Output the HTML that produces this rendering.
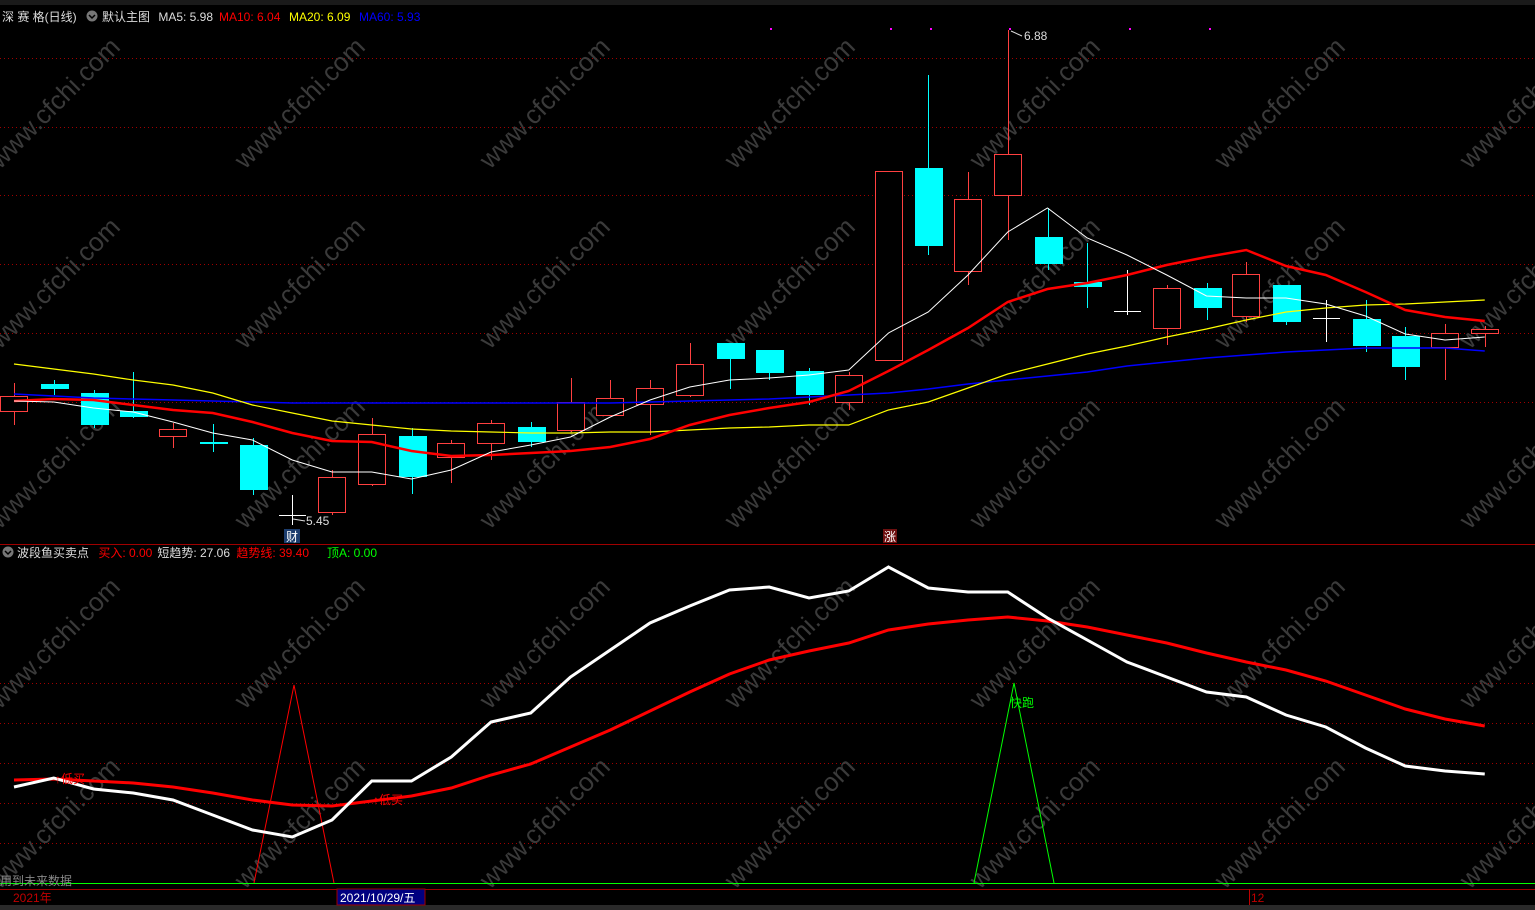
<!DOCTYPE html>
<html><head><meta charset="utf-8"><style>
body{margin:0;background:#000;width:1535px;height:910px;overflow:hidden;font-family:"Liberation Sans","Noto Sans CJK SC",sans-serif}
svg{position:absolute;left:0;top:0}
.t{font-size:12px}
</style></head><body>
<svg id="s" width="1535" height="910" xmlns="http://www.w3.org/2000/svg">
<rect width="1535" height="910" fill="#000"/>
<rect x="0" y="0" width="1535" height="5" fill="#1a1a1a"/>
<rect x="0" y="905" width="1535" height="5" fill="#2a2a2a"/>
<g stroke="#a00000" stroke-dasharray="1,3" stroke-width="1">
<line x1="0" y1="58.5" x2="1535" y2="58.5"/><line x1="0" y1="127.5" x2="1535" y2="127.5"/>
<line x1="0" y1="195.5" x2="1535" y2="195.5"/><line x1="0" y1="264.5" x2="1535" y2="264.5"/>
<line x1="0" y1="333.5" x2="1535" y2="333.5"/><line x1="0" y1="402.5" x2="1535" y2="402.5"/>
<line x1="0" y1="683.5" x2="1535" y2="683.5"/><line x1="0" y1="723.5" x2="1535" y2="723.5"/>
<line x1="0" y1="763.5" x2="1535" y2="763.5"/><line x1="0" y1="803.5" x2="1535" y2="803.5"/>
<line x1="0" y1="843.5" x2="1535" y2="843.5"/>
</g>
<g fill="#3a3a3a" font-size="26" font-family="Liberation Sans,sans-serif">
<text transform="translate(0,170) rotate(-45)">www.cfchi.com</text>
<text transform="translate(245,170) rotate(-45)">www.cfchi.com</text>
<text transform="translate(490,170) rotate(-45)">www.cfchi.com</text>
<text transform="translate(735,170) rotate(-45)">www.cfchi.com</text>
<text transform="translate(980,170) rotate(-45)">www.cfchi.com</text>
<text transform="translate(1225,170) rotate(-45)">www.cfchi.com</text>
<text transform="translate(1470,170) rotate(-45)">www.cfchi.com</text>
<text transform="translate(0,350) rotate(-45)">www.cfchi.com</text>
<text transform="translate(245,350) rotate(-45)">www.cfchi.com</text>
<text transform="translate(490,350) rotate(-45)">www.cfchi.com</text>
<text transform="translate(735,350) rotate(-45)">www.cfchi.com</text>
<text transform="translate(980,350) rotate(-45)">www.cfchi.com</text>
<text transform="translate(1225,350) rotate(-45)">www.cfchi.com</text>
<text transform="translate(1470,350) rotate(-45)">www.cfchi.com</text>
<text transform="translate(0,530) rotate(-45)">www.cfchi.com</text>
<text transform="translate(245,530) rotate(-45)">www.cfchi.com</text>
<text transform="translate(490,530) rotate(-45)">www.cfchi.com</text>
<text transform="translate(735,530) rotate(-45)">www.cfchi.com</text>
<text transform="translate(980,530) rotate(-45)">www.cfchi.com</text>
<text transform="translate(1225,530) rotate(-45)">www.cfchi.com</text>
<text transform="translate(1470,530) rotate(-45)">www.cfchi.com</text>
<text transform="translate(0,710) rotate(-45)">www.cfchi.com</text>
<text transform="translate(245,710) rotate(-45)">www.cfchi.com</text>
<text transform="translate(490,710) rotate(-45)">www.cfchi.com</text>
<text transform="translate(735,710) rotate(-45)">www.cfchi.com</text>
<text transform="translate(980,710) rotate(-45)">www.cfchi.com</text>
<text transform="translate(1225,710) rotate(-45)">www.cfchi.com</text>
<text transform="translate(1470,710) rotate(-45)">www.cfchi.com</text>
<text transform="translate(0,890) rotate(-45)">www.cfchi.com</text>
<text transform="translate(245,890) rotate(-45)">www.cfchi.com</text>
<text transform="translate(490,890) rotate(-45)">www.cfchi.com</text>
<text transform="translate(735,890) rotate(-45)">www.cfchi.com</text>
<text transform="translate(980,890) rotate(-45)">www.cfchi.com</text>
<text transform="translate(1225,890) rotate(-45)">www.cfchi.com</text>
<text transform="translate(1470,890) rotate(-45)">www.cfchi.com</text>
</g>
<g id="cand"></g>
<g id="lines"></g>
<g fill="#ff00ff"><rect x="770" y="28" width="2" height="2"/><rect x="890" y="28" width="2" height="2"/><rect x="930" y="28" width="2" height="2"/><rect x="1009" y="28" width="2" height="2"/><rect x="1129" y="28" width="2" height="2"/><rect x="1209" y="28" width="2" height="2"/></g>
<text x="1024" y="40" fill="#ddd" class="t">6.88</text>
<path d="M1011 31 L1022 36" stroke="#ddd"/>
<text x="306" y="525" fill="#ddd" class="t">5.45</text>
<path d="M293 519 L305 521" stroke="#ddd"/>
<rect x="284" y="529" width="16" height="14" fill="#1c3d6e"/>
<text x="286" y="541" fill="#fff" class="t">财</text>
<rect x="883" y="529" width="14" height="14" fill="#6e1010"/>
<text x="884" y="541" fill="#fff" class="t">涨</text>
<line x1="0" y1="544.5" x2="1535" y2="544.5" stroke="#a00000"/>
<circle cx="8" cy="552" r="5.5" fill="#777"/>
<path d="M5 551 L8 554 L11 551" stroke="#000" fill="none" stroke-width="1.5"/>
<text y="557" class="t"><tspan x="17" fill="#ddd">波段鱼买卖点</tspan><tspan x="95" fill="#f00"> 买入: 0.00</tspan><tspan x="154" fill="#ddd"> 短趋势: 27.06</tspan><tspan x="233" fill="#f00"> 趋势线: 39.40</tspan><tspan x="327" fill="#0f0">顶A: 0.00</tspan></text>
<circle cx="92" cy="16" r="5.5" fill="#777"/>
<path d="M89 15 L92 18 L95 15" stroke="#000" fill="none" stroke-width="1.5"/>
<text y="21" class="t"><tspan x="2" fill="#ddd">深 赛 格(日线)</tspan><tspan x="102" fill="#ddd">默认主图</tspan><tspan x="155" fill="#ddd"> MA5: 5.98</tspan><tspan x="219" fill="#f00">MA10: 6.04</tspan><tspan x="289" fill="#ff0">MA20: 6.09</tspan><tspan x="359" fill="#00f">MA60: 5.93</tspan></text>
<polyline points="254,883 294,685 334,883" fill="none" stroke="#f00" stroke-width="1"/>
<polyline points="974,883 1014,683 1054,883" fill="none" stroke="#0f0" stroke-width="1"/>
<g id="low"></g>
<text x="55" y="783" fill="#f00" class="t">↑低买</text>
<text x="373" y="804" fill="#f00" class="t">↑低买</text>
<text x="1010" y="707" fill="#0f0" class="t">快跑</text>
<line x1="0" y1="883.5" x2="1535" y2="883.5" stroke="#0f0"/>
<line x1="0" y1="889.5" x2="1535" y2="889.5" stroke="#a00000"/>
<text x="0" y="885" fill="#888" class="t">用到未来数据</text>
<text x="13" y="902" fill="#c00000" class="t">2021年</text>
<rect x="337" y="889" width="88" height="16" fill="#000080" stroke="#a00000"/>
<text x="340" y="902" fill="#fff" class="t">2021/10/29/五</text>
<line x1="1249.5" y1="889" x2="1249.5" y2="905" stroke="#c00000"/>
<text x="1251" y="902" fill="#c00000" class="t">12</text>
</svg>
<script>
var NS="http://www.w3.org/2000/svg";
function X(i){return 14+i*39.75;}
function el(p,n,a){var e=document.createElementNS(NS,n);for(var k in a)e.setAttribute(k,a[k]);p.appendChild(e);return e;}
// type: r red hollow, c cyan, w white cross ; [type, bodyTop, bodyBot, wickTop, wickBot]
var C=[["r",396,411,383,425],["c",384,389,380,395],["c",393,425,390,428],["c",411,417,372,418],["r",429,436,423,448],["c",442,444,424,452],["c",445,490,438,495],["w",515,515,495,525],["r",477,512,470,515],["r",434,484,418,486],["c",436,477,428,494],["r",443,457,440,483],["r",423,443,420,460],["c",427,442,422,447],["r",402,430,378,432],["r",398,415,380,416],["r",388,404,380,435],["r",364,395,343,397],["c",343,359,343,389],["c",350,373,350,380],["c",371,395,368,405],["r",375,402,372,410],["r",171,360,171,360],["c",168,246,75,255],["r",199,271,172,285],["r",154,195,30,240],["c",237,264,208,270],["c",282,287,243,308],["w",311,311,270,315],["r",288,328,285,345],["c",288,308,283,320],["r",274,316,262,322],["c",285,322,285,325],["w",318,318,300,342],["c",319,346,300,352],["c",336,367,327,380],["r",333,347,324,380],["r",329,333,326,347]];
var g=document.getElementById("cand");
C.forEach(function(c,i){var x=Math.round(X(i));var col=c[0]=="r"?"#ff4040":c[0]=="c"?"#00ffff":"#ffffff";
 el(g,"line",{x1:x+.5,x2:x+.5,y1:c[3],y2:c[4],stroke:col});
 if(c[0]=="r")el(g,"rect",{x:x-13.5,y:c[1]+.5,width:27,height:Math.max(c[2]-c[1],1),fill:"#000",stroke:col});
 else if(c[0]=="c")el(g,"rect",{x:x-13,y:c[1],width:28,height:Math.max(c[2]-c[1],2),fill:col});
 else el(g,"line",{x1:x-13,x2:x+14,y1:c[1]+.5,y2:c[1]+.5,stroke:col});
});
function pl(p,ys,col,w){el(p,"polyline",{points:ys.map(function(y,i){return X(i)+","+y}).join(" "),fill:"none",stroke:col,"stroke-width":w});}
var L=document.getElementById("lines");
pl(L,[394,396,398,399,400,401,402,403,403,403,403,403,403,403,403,403,402,401,400,399,397,395,393,389,384,380,376,372,366,362,358,355,352,350,348,348,348,351,359].slice(0,38),"#0000ff",1.5);
pl(L,[364,369,374,380,385,393,405,413,421,425,429,431,432,433,433,432,432,430,428,427,425,425,410,402,388,374,364,354,346,337,329,320,312,308,305,304,302,300],"#ffff00",1.2);
pl(L,[401,399,400,405,410,413,422,433,441,442,451,456,455,453,451,447,439,425,415,408,402,391,371,350,328,302,289,283,275,265,257,250,266,275,292,310,317,321],"#ff0000",2.5);
pl(L,[401,402,408,412,422,433,440,460,472,472,479,470,452,445,437,417,400,387,380,378,375,370,333,312,275,232,208,238,255,275,296,298,298,304,316,334,340,337],"#ffffff",1);
var W=document.getElementById("low");
pl(W,[780,779,781,783,787,793,800,805,806,801,796,788,775,764,747,730,711,692,674,660,651,643,630,624,620,617,621,627,635,643,653,662,670,681,695,709,719,726],"#ff0000",3);
pl(W,[787,778,789,793,800,815,830,837,820,781,781,757,722,713,677,650,623,606,590,587,598,591,567,588,592,592,618,640,662,677,692,697,715,727,748,766,771,774],"#ffffff",3);
</script>
</body></html>
